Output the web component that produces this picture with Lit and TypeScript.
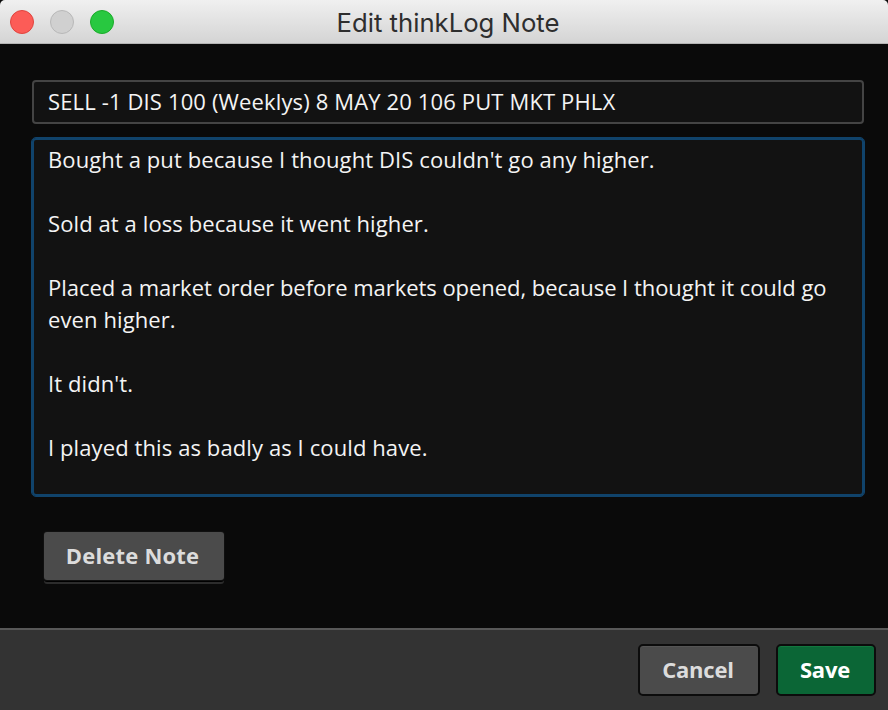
import { LitElement, html, css } from "lit";
import { customElement } from "lit/decorators.js";

@customElement("app-root")
export class AppRoot extends LitElement {
  static styles = css`
    :host { display: flex; flex-direction: column; width: 888px; height: 710px; overflow: hidden;
      font-family: "Open Sans", sans-serif; background: #0a0a0a; color: #f4f4f4; }
    .title { flex: none; height: 44px; box-sizing: border-box; display: flex; align-items: center; justify-content: center;
      position: relative; background: linear-gradient(#f0f0f0, #d4d4d4); border-bottom: 1px solid #b4b4b4; color: #2e2e2e;
      font-family: Inter, sans-serif; font-size: 25.7px; border-radius: 5px 5px 0 0; padding: 1px 0 0 8px; }
    .lights { position: absolute; left: 10px; top: 10px; display: flex; gap: 16px; }
    .light { width: 24px; height: 24px; border-radius: 50%; box-sizing: border-box; border: 1px solid; }
    .red { background: #fc5c57; border-color: #e0443e; }
    .gray { background: #d0d0d0; border-color: #b8b8b8; }
    .green { background: #28c840; border-color: #1aab29; }
    .body { flex: 1; display: flex; flex-direction: column; padding: 36px 24px 0 31px; background: #0a0a0a; }
    .field { box-sizing: border-box; background: #121212; font-size: 22px; letter-spacing: 0.1px; }
    .subject { margin: 0 1px; width: 832px; height: 44px; border: 2px solid #444; border-radius: 4px; padding: 0 14px 3px;
      display: flex; align-items: center; white-space: nowrap; letter-spacing: 0.14px; }
    .note { margin-top: 13px; width: 834px; height: 360px; border: 1px solid #10436b; outline: 2px solid #10436b; outline-offset: -3px;
      border-radius: 5px; padding: 5px 16px; line-height: 32px; }
    .note div { min-height: 32px; }
    .tight { letter-spacing: -0.04px; }
    .delete { margin: 35px 0 0 13px; width: 180px; height: 48px; box-sizing: border-box; display: flex; align-items: center; justify-content: center;
      background: #4b4b4b; color: #dcdcdc; font-weight: 700; font-size: 22px; letter-spacing: 0.2px; border-radius: 3px;
      box-shadow: 0 0 0 1px #101010, 0 2px 0 #000, 0 4px 0 #2c2c2c; padding: 0 3px 2px 0; }
    .footer { flex: none; height: 82px; box-sizing: border-box; background: #333; border-top: 2px solid #585858;
      display: flex; justify-content: flex-end; align-items: center; gap: 16px; padding: 0 12px 0 0; }
    .btn { box-sizing: border-box; height: 52px; display: flex; align-items: center; justify-content: center; font-weight: 700; font-size: 22px;
      border: 2px solid #0c0c0c; border-radius: 5px; padding-bottom: 2px; letter-spacing: -0.2px; }
    .cancel { width: 122px; background: #4b4b4b; color: #dcdcdc; box-shadow: inset 0 1px 0 #555; padding-right: 2px; }
    .save { width: 100px; background: #0b6636; color: #fff; box-shadow: inset 0 1px 0 #13783f; padding-right: 2px; }
  `;
  render() {
    return html`
      <div class="title">
        <div class="lights"><div class="light red"></div><div class="light gray"></div><div class="light green"></div></div>
        Edit thinkLog Note
      </div>
      <div class="body">
        <div class="field subject">SELL -1 DIS 100 (Weeklys) 8 MAY 20 106 PUT MKT PHLX</div>
        <div class="field note">
          <div>Bought a put because I thought DIS couldn't go any higher.</div>
          <div></div>
          <div>Sold at a loss because it went higher.</div>
          <div></div>
          <div><span class="tight">Placed a market order before markets opened, because I thought it could go</span> even higher.</div>
          <div></div>
          <div>It didn't.</div>
          <div></div>
          <div>I played this as badly as I could have.</div>
        </div>
        <div class="delete">Delete Note</div>
      </div>
      <div class="footer">
        <div class="btn cancel">Cancel</div>
        <div class="btn save">Save</div>
      </div>
    `;
  }
}
